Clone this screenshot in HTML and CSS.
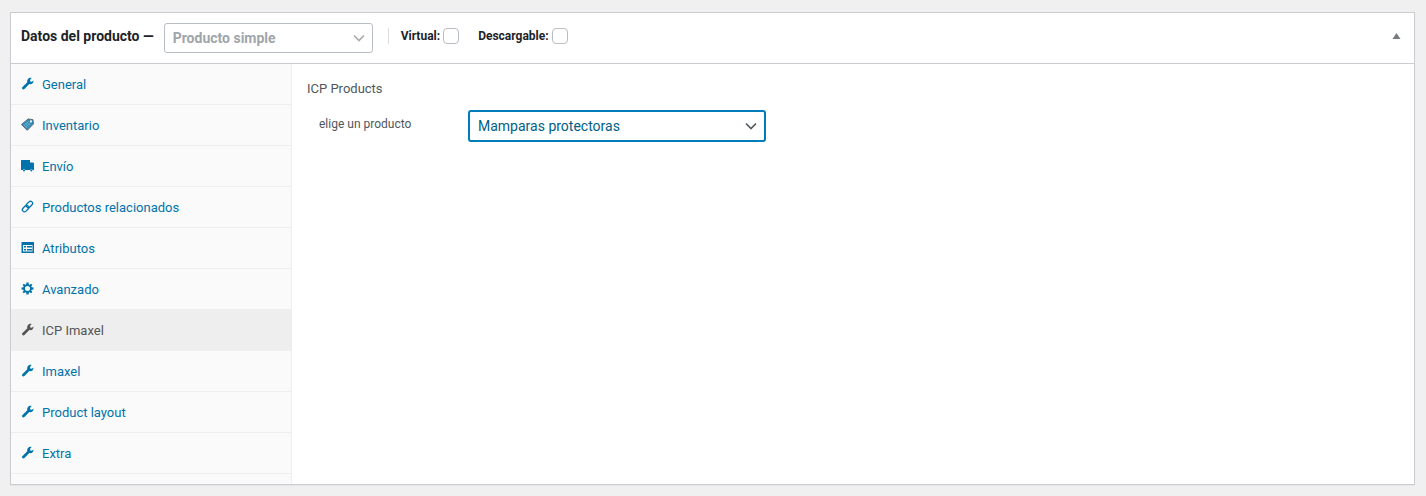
FILE: index.html
```html
<!DOCTYPE html>
<html lang="es">
<head>
<meta charset="utf-8">
<meta name="viewport" content="width=device-width, initial-scale=1">
<title>Datos del producto</title>
<link rel="stylesheet" href="styles.css">
</head>
<body>
<svg class="sprite" aria-hidden="true">
  <symbol id="wrench" viewBox="0 0 13 13"><path d="M10.600 1 9 2.900l.3 1.600 1.600.3L12.500 3.400c.2 2.600-1.800 4.200-4.200 3.600L3.700 11.800c-.8.900-1.700.9-2.300.3s-.5-1.500.4-2.300L6.300 5.300C5.700 2.800 7.800.2 10.600 1z"/></symbol>
  <symbol id="tag" viewBox="0 0 20 20"><path class="tag-fill" d="M11 1.500 18.300 2.500 19.300 9 9.500 19 .8 10z"/><path class="tag-edge" d="M11 1.500 18.300 2.500 19.300 9 9.500 19 .8 10z"/><path class="mesh" d="M4 10l5.500 5.500M6.200 7.800l5.500 5.500M8.500 5.500l5.500 5.500M4.500 12.500l7.500-7.500M7 14.800l7.500-7.500"/><circle class="tag-hole" cx="15.300" cy="5.300" r="1.700"/></symbol>
  <symbol id="truck" viewBox="0 0 13 13"><path d="M.5 1H9v2.500h3.300l.7 1V11h-1.300a1.500 1.500 0 0 0-2.600 0H4.300a1.500 1.500 0 0 0-2.600 0H0V1.500z"/><circle cx="3" cy="11.500" r="1"/><circle cx="10.400" cy="11.500" r="1"/></symbol>
  <symbol id="chain" viewBox="0 0 20 20"><g class="outline"><rect x="7.500" y="3.500" width="11" height="6.500" rx="3.200" transform="rotate(-45 13 6.800)"/><rect x="1.500" y="10" width="11" height="6.500" rx="3.200" transform="rotate(-45 7 13.200)"/></g></symbol>
  <symbol id="table" viewBox="0 0 13 13"><path fill-rule="evenodd" d="M.5 1h12.500v11H.5zM2 4v6.500h9.500V4zM3 5h2v1.500H3zM6 5h5v1.500H6zM3 8h2v1.500H3zM6 8h5v1.500H6z"/></symbol>
  <symbol id="gear" viewBox="0 0 20 20"><path fill-rule="evenodd" d="M8.400.8h3.200l.5 2.900 1.300.5 2.200-1.600 1.900 1.900-1.600 2.200.5 1.300 2.800.4v3.200l-2.800.4-.5 1.300 1.600 2.200-1.900 1.900-2.200-1.600-1.300.5-.5 2.900H8.400l-.5-2.900-1.300-.5-2.200 1.600-1.900-1.900 1.600-2.200-.5-1.300L.8 11.600V8.400l2.800-.4.5-1.300-1.600-2.200 1.900-1.900 2.200 1.600 1.300-.5zM10 6.100a3.900 3.900 0 1 0 0 7.800 3.900 3.900 0 0 0 0-7.800z"/></symbol>
  <symbol id="chevron" viewBox="0 0 16 16"><path class="outline" d="M3 5.500l5 5 5-5"/></symbol>
</svg>

<main class="postbox">
  <header class="postbox-header">
    <h2 class="title"><label for="product-type">Datos del producto —</label></h2>
    <div class="select select-type">
      <select id="product-type" disabled><option>Producto simple</option></select>
      <svg class="chevron"><use href="#chevron"/></svg>
    </div>
    <div class="options">
      <label class="option" for="virtual">Virtual:<input type="checkbox" id="virtual"></label>
      <label class="option" for="downloadable">Descargable:<input type="checkbox" id="downloadable"></label>
    </div>
    <button class="toggle" type="button" aria-label="Contraer panel"><svg viewBox="0 0 8 6"><path d="M4 0l4 6H0z"/></svg></button>
  </header>
  <div class="panel-wrap">
    <nav class="tabs">
      <a class="tab" href="#general"><svg class="icon"><use href="#wrench"/></svg>General</a>
      <a class="tab" href="#inventario"><svg class="icon"><use href="#tag"/></svg>Inventario</a>
      <a class="tab" href="#envio"><svg class="icon"><use href="#truck"/></svg>Envío</a>
      <a class="tab" href="#relacionados"><svg class="icon"><use href="#chain"/></svg>Productos relacionados</a>
      <a class="tab" href="#atributos"><svg class="icon"><use href="#table"/></svg>Atributos</a>
      <a class="tab" href="#avanzado"><svg class="icon"><use href="#gear"/></svg>Avanzado</a>
      <a class="tab active" href="#icp" aria-current="page"><svg class="icon"><use href="#wrench"/></svg>ICP Imaxel</a>
      <a class="tab" href="#imaxel"><svg class="icon"><use href="#wrench"/></svg>Imaxel</a>
      <a class="tab" href="#layout"><svg class="icon"><use href="#wrench"/></svg>Product layout</a>
      <a class="tab" href="#extra"><svg class="icon"><use href="#wrench"/></svg>Extra</a>
    </nav>
    <section class="panel" id="icp">
      <p class="panel-title">ICP Products</p>
      <div class="field">
        <label for="icp-product">elige un producto</label>
        <div class="select select-product">
          <select id="icp-product"><option>Mamparas protectoras</option></select>
          <svg class="chevron"><use href="#chevron"/></svg>
        </div>
      </div>
    </section>
  </div>
</main>
</body>
</html>
```
FILE: styles.css
```css
* {
  box-sizing: border-box;
}

body {
  margin: 0;
  padding: 12px 11px 10px 10px;
  background: #f0f0f1;
  color: #50575e;
  font: 13px/18px Roboto, sans-serif;
}

.sprite {
  position: absolute;
  width: 0;
  height: 0;
}

.postbox {
  background: #fff;
  border: 1px solid #c9ccd1;
  box-shadow: 0 1px 1px rgba(0, 0, 0, 0.04);
}

.postbox-header {
  display: flex;
  align-items: center;
  padding: 10px 13px 10px 10px;
  border-bottom: 1px solid #c9ccd1;
  color: #1d2327;
}

.title {
  margin: 0 10px 4px 0;
  font-size: 14px;
  line-height: 20px;
  font-weight: 700;
}

.select {
  display: grid;
  align-items: center;
}

.select select,
.select .chevron {
  grid-area: 1 / 1;
}

.select select {
  width: 100%;
  height: 30px;
  margin: 0;
  padding: 0 24px 0 8px;
  appearance: none;
  background: #fff;
  border: 1px solid #b9bec5;
  border-radius: 3px;
  color: #50575e;
  font: 14px/28px Roboto, sans-serif;
  opacity: 1;
}

.select .chevron {
  justify-self: end;
  width: 16px;
  height: 16px;
  margin-right: 7px;
  color: #50575e;
  stroke-width: 1.6;
  pointer-events: none;
}

.select-type {
  width: 209px;
}

.select-type select {
  color: #a0a5aa;
  font-weight: 700;
}

.select-type .chevron {
  margin-right: 6px;
  color: #a7aaad;
}

.outline {
  fill: none;
  stroke: currentColor;
}

.options {
  display: flex;
  gap: 19px;
  height: 16px;
  margin: 0 0 4px 15px;
  padding-left: 12px;
  border-left: 1px solid #dcdcde;
}

.option {
  display: flex;
  align-items: center;
  gap: 3px;
  font-size: 12px;
  line-height: 18px;
  font-weight: 700;
}

.option input {
  width: 16px;
  height: 16px;
  margin: 0;
  appearance: none;
  background: #fff;
  border: 1px solid #b9bec5;
  border-radius: 4px;
}

.toggle {
  display: flex;
  margin: 0 0 4px auto;
  padding: 0;
  border: 0;
  background: none;
  color: #787c82;
}

.toggle svg {
  width: 9px;
  height: 6px;
  fill: currentColor;
}

.panel-wrap {
  display: flex;
}

.tabs {
  flex: 0 0 281px;
  padding-bottom: 10px;
  background: #fafafa;
  border-right: 1px solid #eee;
}

.tab {
  display: flex;
  align-items: center;
  gap: 8px;
  height: 41px;
  padding: 2px 10px 0;
  border-bottom: 1px solid #eee;
  color: #0073aa;
  text-decoration: none;
}

.tab.active {
  background: #eee;
  color: #555;
}

.icon {
  width: 13px;
  height: 13px;
  margin-bottom: 4px;
  fill: currentColor;
  stroke-width: 2;
}

.mesh {
  fill: none;
  stroke: #fafafa;
  stroke-width: 1;
  opacity: 0.35;
}

.tag-fill {
  opacity: 0.8;
}

.tag-edge {
  fill: none;
  stroke: #50676e;
  stroke-width: 1.5;
}

.tag-hole {
  fill: #fafafa;
}

.panel {
  flex: 1;
  min-width: 0;
  padding: 16px 15px;
}

.panel-title {
  margin: 0 0 12px;
}

.field {
  display: flex;
  padding-left: 12px;
}

.field label {
  flex: 0 0 149px;
  padding-top: 5px;
  font-size: 12px;
}

.select-product {
  flex: 0 1 298px;
}

.select-product select {
  height: 32px;
  border: 2px solid #007cba;
  color: #016087;
}
```
